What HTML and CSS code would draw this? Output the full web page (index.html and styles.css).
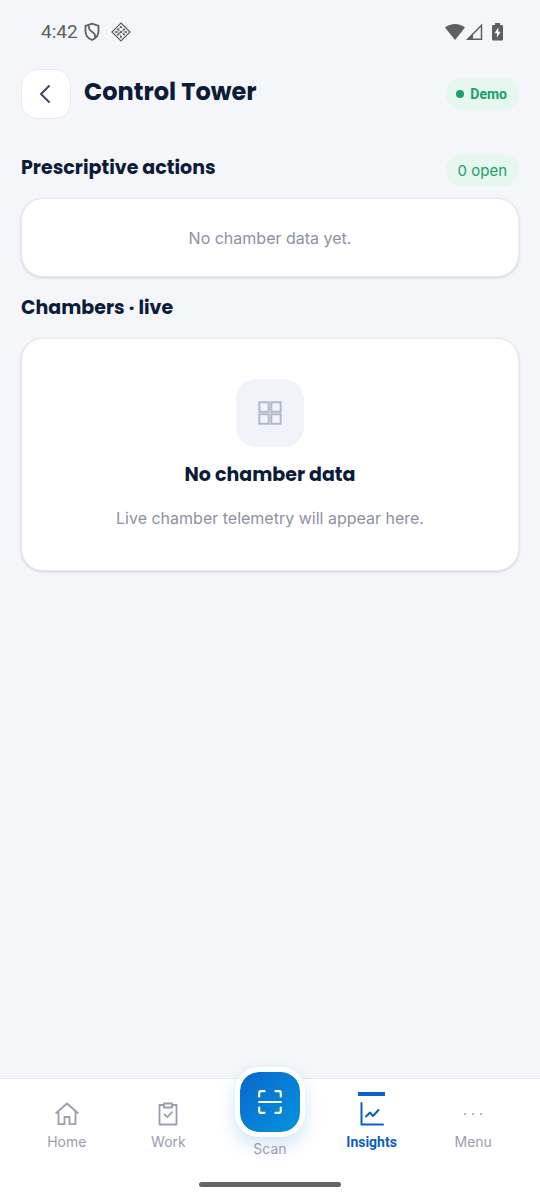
FILE: index.html
```html
<!DOCTYPE html>
<html lang="en">
<head>
<meta charset="utf-8">
<meta name="viewport" content="width=device-width, initial-scale=1">
<title>Control Tower</title>
<link rel="stylesheet" href="styles.css">
</head>
<body>
<div class="app">
  <div class="status">
    <div class="status-group">
      <span class="clock">4:42</span>
      <svg class="shield" width="16" height="20" viewBox="0 0 16 20" fill="none" stroke="currentColor" stroke-width="1.800"><path d="M8 1.600 14.500 3.800V9c0 4.300-2.600 7.400-6.500 9-3.900-1.600-6.500-4.700-6.500-9V3.800z"/><path d="M4.800 3.500c-.5 3 .6 4.700 3.200 6.300 2.700 1.600 3.600 3.400 3 6"/></svg>
      <svg width="20" height="20" viewBox="0 0 20 20" fill="none" stroke="currentColor"><path stroke-width="1.200" d="M10 1 19 10 10 19 1 10z"/><path stroke-width=".7" d="M10 5 7 7.500l6 5M13 7.500l-6 5M5 10h3l2 5M12 10h3"/><g fill="currentColor" stroke="none"><circle cx="10" cy="5" r="1.100"/><circle cx="7" cy="7.500" r="1.100"/><circle cx="13" cy="7.500" r="1.100"/><circle cx="5" cy="10" r="1.100"/><circle cx="10" cy="10" r="1.100"/><circle cx="15" cy="10" r="1.100"/><circle cx="7" cy="12.500" r="1.100"/><circle cx="13" cy="12.500" r="1.100"/><circle cx="10" cy="15" r="1.100"/></g></svg>
    </div>
    <div class="status-signals">
      <svg width="20" height="18" viewBox="0 0 20 18" fill="currentColor"><path d="M0 4.500C5.500-.2 14.500-.2 20 4.500L10 17z"/></svg>
      <svg width="17" height="18" viewBox="0 0 17 18"><path fill="none" stroke="currentColor" stroke-width="1.500" d="M15.500 2.300v13.900H1.800z"/><path fill="currentColor" d="M1 16.500 7 10.500v6z"/></svg>
      <svg class="battery" width="11" height="18" viewBox="0 0 11 18"><path fill="currentColor" d="M3 0h5v2h2q1 0 1 1v13.500q0 1-1 1H1q-1 0-1-1V3q0-1 1-1h2z"/><path fill="#fff" d="M6.300 4.500 2.500 10.300h2.400v4.400l3.700-6H6.300z"/></svg>
    </div>
  </div>

  <header class="header">
    <button class="back" type="button" aria-label="Back"><svg width="12" height="20" viewBox="0 0 12 20" fill="none" stroke="currentColor" stroke-width="2" stroke-linecap="round" stroke-linejoin="round"><path d="M10 2 2 10l8 8"/></svg></button>
    <h1 class="title">Control Tower</h1>
    <span class="pill demo"><span class="dot"></span>Demo</span>
  </header>

  <main class="content">
    <div class="section-head">
      <h2 class="section-title">Prescriptive actions</h2>
      <span class="pill">0 open</span>
    </div>
    <section class="card brief"><p class="muted">No chamber data yet.</p></section>
    <h2 class="section-title chambers">Chambers · live</h2>
    <section class="card empty">
      <div class="tile"><svg width="24" height="24" viewBox="0 0 24 24" fill="none" stroke="currentColor" stroke-width="2"><path d="M1.300 1.300h9.400v9.400H1.300zM13.300 1.300h9.400v9.400h-9.400zM1.300 13.300h9.400v9.400H1.300zM13.300 13.300h9.400v9.400h-9.400z"/></svg></div>
      <h3 class="empty-title">No chamber data</h3>
      <p class="muted">Live chamber telemetry will appear here.</p>
    </section>
  </main>

  <nav class="nav">
    <a class="tab" href="#"><svg width="24" height="24" viewBox="0 0 24 24" fill="none" stroke="currentColor" stroke-width="1.800" stroke-linecap="round" stroke-linejoin="round"><path d="M1.200 11 12 1.500 22.800 11M3.500 9.300v12.900h6V15h5v7.200h6V9.300"/></svg>Home</a>
    <a class="tab" href="#"><svg width="24" height="24" viewBox="0 0 24 24" fill="none" stroke="currentColor" stroke-width="1.800" stroke-linejoin="round"><path d="M8 3H3.500v19.500h17V3H16M8 1.500h8v4H8z"/><path stroke-linecap="round" d="m8.500 12.500 2.800 2.700 4.700-5"/></svg>Work</a>
    <a class="tab scan" href="#"><span class="scan-button"><svg width="24" height="24" viewBox="0 0 24 24" fill="none" stroke="currentColor" stroke-width="2.200" stroke-linecap="round" stroke-linejoin="round"><path d="M1.200 6.500V3q0-1.800 1.800-1.800h3.500M17.500 1.200H21q1.800 0 1.800 1.800v3.500M22.800 17.500V21q0 1.800-1.800 1.800h-3.500M6.500 22.800H3q-1.800 0-1.800-1.800v-3.500M1.200 12h21.600"/></svg></span>Scan</a>
    <a class="tab active" href="#" aria-current="page"><svg width="24" height="24" viewBox="0 0 24 24" fill="none" stroke="currentColor" stroke-width="2" stroke-linecap="round" stroke-linejoin="round"><path d="M1.500 1v21.500H23M6 14.500l4-4 3 3.500 5.500-6"/></svg>Insights</a>
    <a class="tab" href="#"><svg width="24" height="24" viewBox="0 0 24 24" fill="currentColor"><circle cx="4" cy="12" r="1"/><circle cx="12" cy="12" r="1"/><circle cx="20" cy="12" r="1"/></svg>Menu</a>
    <span class="home-indicator"></span>
  </nav>
</div>
</body>
</html>
```
FILE: styles.css
```css
* { box-sizing: border-box; }

body {
  margin: 0;
  background: #f4f6fa;
  color: #0c1b38;
  font-family: Inter, "Liberation Sans", sans-serif;
}

h1, h2, h3, p { margin: 0; }
h1, h2, h3 { font-family: Poppins, Inter, sans-serif; font-weight: 700; }
svg { display: block; flex: none; }

.app {
  min-height: 100vh;
  display: flex;
  flex-direction: column;
}

.status {
  height: 64px;
  padding: 0 37px 0 41px;
  display: flex;
  align-items: center;
  justify-content: space-between;
  color: #5d5f62;
}
.status-group, .status-signals { display: flex; align-items: center; }
.clock { font: 19px/24px Roboto, sans-serif; }
.shield { margin: 0 11px 0 6px; }
.status-signals { gap: 1px; }
.battery { margin-left: 8px; }

.header {
  padding: 5px 21px 0;
  display: flex;
  align-items: center;
}
.back {
  width: 50px;
  height: 50px;
  padding: 0 2px 0 0;
  display: flex;
  align-items: center;
  justify-content: center;
  color: #424561;
  background: #fff;
  border: 1px solid #e8eaf0;
  border-radius: 16px;
}
.title {
  flex: 1;
  padding: 0 0 4px 13px;
  font-size: 24px;
  line-height: 32px;
}

.pill {
  height: 32px;
  padding: 0 12px;
  display: flex;
  align-items: center;
  border-radius: 16px;
  background: #e6f7ef;
  color: #1b9e6b;
  font-size: 15px;
}
.demo {
  gap: 6px;
  padding: 0 12px 0 10px;
  font: 700 14px/20px Roboto, sans-serif;
}
.dot {
  width: 8px;
  height: 8px;
  border-radius: 50%;
  background: currentColor;
}

.content {
  flex: 1;
  padding: 35px 21px 24px;
}
.section-head {
  display: flex;
  align-items: center;
  justify-content: space-between;
  margin-bottom: 12px;
}
.section-title { font-size: 19px; line-height: 28px; }
.section-head .section-title { padding-bottom: 4px; }
.chambers { margin: 17px 0 16px; }

.card {
  background: #fff;
  border: 1px solid #e6e8ed;
  border-radius: 22px;
  box-shadow: 0 1px 3px rgba(12, 27, 56, 0.16);
  text-align: center;
}
.brief { padding: 27px 20px 26px; }
.empty {
  padding: 40px 20px;
  display: flex;
  flex-direction: column;
  align-items: center;
}
.muted {
  color: #8d91a1;
  font-size: 16px;
  line-height: 24px;
}
.tile {
  width: 68px;
  height: 68px;
  display: flex;
  align-items: center;
  justify-content: center;
  border-radius: 20px;
  background: #f0f4fa;
  color: #b3b8c7;
}
.empty-title {
  margin: 13px 0 16px;
  font-size: 19px;
  line-height: 30px;
}

.nav {
  position: relative;
  height: 122px;
  padding: 0 16px;
  display: grid;
  grid-template-columns: repeat(5, 1fr);
  background: #fff;
  border-top: 1px solid #e8ebf0;
}
.tab {
  position: relative;
  display: flex;
  flex-direction: column;
  align-items: center;
  gap: 6px;
  padding-top: 23px;
  color: #9a9ead;
  font-size: 14px;
  line-height: 20px;
  text-decoration: none;
}
.scan { padding-top: 0; gap: 2px; }
.scan-button {
  width: 70px;
  height: 70px;
  margin-top: -12px;
  display: flex;
  align-items: center;
  justify-content: center;
  border: 5px solid #fff;
  border-radius: 24px;
  background: linear-gradient(135deg, #0868cc, #0694dc) padding-box, #fff;
  box-shadow: 0 8px 18px rgba(8, 104, 204, 0.18);
  color: #fff;
}
.active {
  color: #0b60bd;
  font-family: Roboto, sans-serif;
  font-weight: 700;
}
.active::before {
  content: "";
  position: absolute;
  top: 13px;
  width: 27px;
  height: 4px;
  background: #0b60cf;
}
.home-indicator {
  position: absolute;
  bottom: 13px;
  left: 50%;
  width: 142px;
  height: 5px;
  transform: translateX(-50%);
  border-radius: 3px;
  background: #666;
}
```
